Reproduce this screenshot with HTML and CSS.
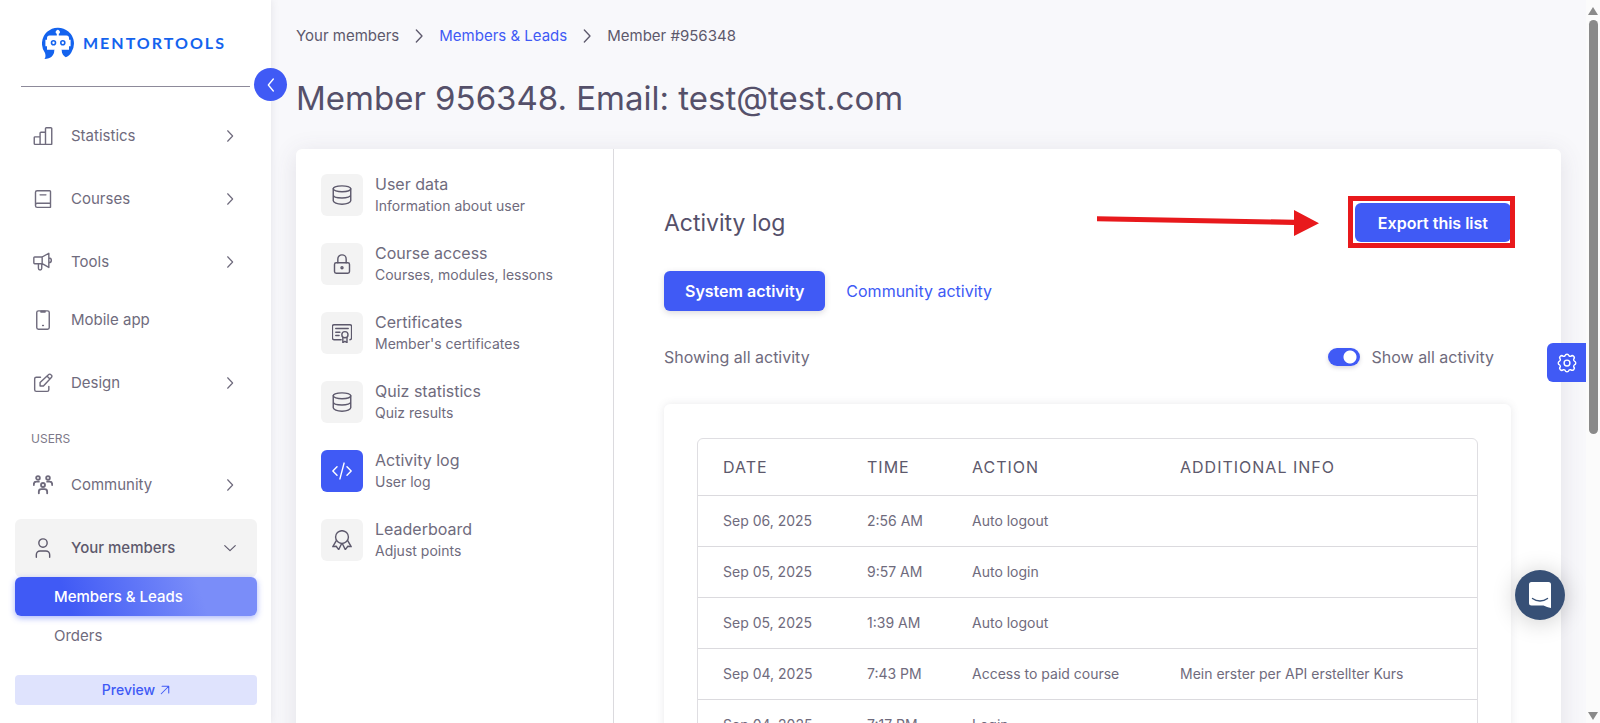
FILE: index.html
```html
<!DOCTYPE html>
<html lang="en">
<head>
    <meta charset="UTF-8">
    <meta name="viewport" content="width=device-width, initial-scale=1.0">
    <title>Member #956348</title>
    <link rel="stylesheet" href="styles.css">
</head>
<body>
    <!-- shared icons -->
    <svg class="sprite" aria-hidden="true">
        <symbol id="chevron" viewBox="0 0 24 24"><path d="M8 3l8.500 9L8 21"/></symbol>
        <symbol id="database" viewBox="0 0 24 24"><ellipse cx="12" cy="4.500" rx="10.500" ry="3.500"/><path d="M1.500 4.500v14.500c0 2 4.500 4 10.500 4s10.500-2 10.500-4v-14.500M1.500 12c0 2 4.500 3.500 10.500 3.500s10.500-1.500 10.500-3.500"/></symbol>
    </svg>

    <aside class="sidebar">
        <div class="brand">
            <svg class="brand-icon" viewBox="0 0 32 32" aria-hidden="true">
                <path fill="#1463ee" d="M2.500 32c1.300-1.800 1.200-3.500.5-6A16 16 0 1 1 29.300 25.500c-1.500 2.500-3.300 3.800-5.500 4.700-2.500-1.500-4-3.500-4.300-7.200h-7c-.2 5-3.500 9-10 9z"/>
                <path fill="#fff" d="M7.500 8.500h7.300V6.800a2 2 0 1 1 2 0v1.700h7.700a2.500 2.500 0 0 1 2.500 2.500v1.800h1.600v6.400H27v3.600H5v-3.600H3.400v-6.400H5V11a2.500 2.500 0 0 1 2.500-2.500zM12.600 22h6.800v10h-6.800z"/>
                <circle cx="11.500" cy="15.800" r="2" fill="none" stroke="#1463ee" stroke-width="1.600"/>
                <circle cx="20.800" cy="15.800" r="2" fill="none" stroke="#1463ee" stroke-width="1.600"/>
            </svg>
            <span class="brand-name">MENTORTOOLS</span>
        </div>
        <button class="collapse-btn" aria-label="Collapse menu"><svg class="icon" viewBox="0 0 24 24"><path d="M15.500 3L8 12l7.500 9"/></svg></button>

        <nav class="nav">
            <a href="#" class="nav-item">
                <svg class="icon" viewBox="0 0 24 24"><path d="M2 22h20.500V3a1 1 0 0 0-1-1H16a1 1 0 0 0-1 1v19M15 7.500H9.500a1 1 0 0 0-1 1V22M8.500 13H2.500a1 1 0 0 0-1 1v7a1 1 0 0 0 1 1"/></svg>
                <span>Statistics</span>
                <svg class="icon arrow"><use href="#chevron"/></svg>
            </a>
            <a href="#" class="nav-item">
                <svg class="icon" viewBox="0 0 24 24"><path d="M5 2h15a1 1 0 0 1 1 1v19H5a2 2 0 0 1-2-2V4a2 2 0 0 1 2-2zM3 19a2 2 0 0 1 2-2h16M8.500 7h7"/></svg>
                <span>Courses</span>
                <svg class="icon arrow"><use href="#chevron"/></svg>
            </a>
            <a href="#" class="nav-item">
                <svg class="icon" viewBox="0 0 24 24"><path d="M2 6h9l8-4.500v17L11 14H2a1 1 0 0 1-1-1V7a1 1 0 0 1 1-1zM11 6v8M19 7c4 0 4 6 0 6M6.500 14v5.500a2 2 0 0 0 4 0V14"/></svg>
                <span>Tools</span>
                <svg class="icon arrow"><use href="#chevron"/></svg>
            </a>
            <a href="#" class="nav-item tight">
                <svg class="icon" viewBox="0 0 24 24"><rect x="4.500" y="1" width="15" height="22" rx="2"/><path d="M9.500 1.500h5v1h-5zM11.500 18.500h1"/></svg>
                <span>Mobile app</span>
            </a>
            <a href="#" class="nav-item">
                <svg class="icon" viewBox="0 0 24 24"><path d="M9 5H4a2 2 0 0 0-2 2v13a2 2 0 0 0 2 2h13a2 2 0 0 0 2-2v-4M8.500 15.500v-4L18.500 2a2 2 0 0 1 3 0l.5.500a2 2 0 0 1 0 3l-9.500 10zM17 4l3 3"/></svg>
                <span>Design</span>
                <svg class="icon arrow"><use href="#chevron"/></svg>
            </a>
            <p class="nav-label">USERS</p>
            <a href="#" class="nav-item">
                <svg class="icon thick" viewBox="0 0 24 24"><circle cx="6" cy="3.500" r="2.200"/><circle cx="18" cy="3.500" r="2.200"/><circle cx="12" cy="12" r="2.400"/><path d="M1 12V11a3 3 0 0 1 3-3h3M23 12V11a3 3 0 0 0-3-3h-3M7 22v-2a3 3 0 0 1 3-3h4a3 3 0 0 1 3 3v2"/></svg>
                <span>Community</span>
                <svg class="icon arrow"><use href="#chevron"/></svg>
            </a>
            <a href="#" class="nav-item open">
                <svg class="icon" viewBox="0 0 24 24"><circle cx="12" cy="6" r="5"/><path d="M4 23v-3a4.500 4.500 0 0 1 4.500-4.500h7A4.500 4.500 0 0 1 20 20v3"/></svg>
                <span>Your members</span>
                <svg class="icon arrow" viewBox="0 0 24 24"><path d="M3 8l9 8.500L21 8"/></svg>
            </a>
            <a href="#" class="sub-item active">Members &amp; Leads</a>
            <a href="#" class="sub-item">Orders</a>
        </nav>
        <a href="#" class="preview">Preview <svg class="icon" viewBox="0 0 24 24"><path d="M3 21L21 3M5 3h16v16"/></svg></a>
    </aside>

    <main class="main">
        <nav class="breadcrumb" aria-label="Breadcrumb">
            <span>Your members</span>
            <svg class="icon"><use href="#chevron"/></svg>
            <a href="#">Members &amp; Leads</a>
            <svg class="icon"><use href="#chevron"/></svg>
            <span>Member #956348</span>
        </nav>
        <h1>Member 956348. Email: test@test.com</h1>

        <div class="card">
            <nav class="member-menu">
                <a href="#" class="menu-item">
                    <span class="menu-icon"><svg class="icon"><use href="#database"/></svg></span>
                    <span class="menu-text">User data<small>Information about user</small></span>
                </a>
                <a href="#" class="menu-item">
                    <span class="menu-icon"><svg class="icon" viewBox="0 0 24 24"><rect x="3" y="10.500" width="18" height="12.500" rx="2"/><path d="M7 10.500V6a5 5 0 0 1 10 0v4.500"/><circle cx="12" cy="16.500" r="1.200"/></svg></span>
                    <span class="menu-text">Course access<small>Courses, modules, lessons</small></span>
                </a>
                <a href="#" class="menu-item">
                    <span class="menu-icon"><svg class="icon" viewBox="0 0 24 24"><path d="M11 20H2.500a2 2 0 0 1-2-2V4a2 2 0 0 1 2-2h19a2 2 0 0 1 2 2v14a2 2 0 0 1-2 2M4.500 6.500h15M4.500 11h5M4.500 15h4"/><circle cx="15.500" cy="14" r="3.700"/><path d="M13 17.500V23.500l2.500-1.500 2.500 1.500v-6"/></svg></span>
                    <span class="menu-text">Certificates<small>Member's certificates</small></span>
                </a>
                <a href="#" class="menu-item">
                    <span class="menu-icon"><svg class="icon"><use href="#database"/></svg></span>
                    <span class="menu-text">Quiz statistics<small>Quiz results</small></span>
                </a>
                <a href="#" class="menu-item active">
                    <span class="menu-icon"><svg class="icon" viewBox="0 0 24 24"><path d="M6 7l-5 5 5 5M18 7l5 5-5 5M14.500 2.500l-5 19"/></svg></span>
                    <span class="menu-text">Activity log<small>User log</small></span>
                </a>
                <a href="#" class="menu-item">
                    <span class="menu-icon"><svg class="icon" viewBox="0 0 24 24"><circle cx="12" cy="8.500" r="7.700"/><path d="M5 13L1 20l4-.5L8 23.500l3.500-7M19 13l4 7-4-.5-3 4-3.500-7"/></svg></span>
                    <span class="menu-text">Leaderboard<small>Adjust points</small></span>
                </a>
            </nav>

            <section class="content">
                <div class="content-head">
                    <h2>Activity log</h2>
                    <svg class="pointer" viewBox="0 0 222 26" aria-hidden="true"><path d="M0 6.300l197 3.500V0l25 13.300L197 26v-11L0 11.300z"/></svg>
                    <div class="export">
                        <button class="btn">Export this list</button>
                    </div>
                </div>
                <div class="tabs">
                    <button class="btn raised">System activity</button>
                    <button class="btn link">Community activity</button>
                </div>
                <div class="filter">
                    <span>Showing all activity</span>
                    <label class="switch"><input type="checkbox" role="switch" checked>Show all activity</label>
                </div>
                <div class="table-card">
                    <table>
                        <thead>
                            <tr><th class="col-date">DATE</th><th class="col-time">TIME</th><th class="col-action">ACTION</th><th>ADDITIONAL INFO</th></tr>
                        </thead>
                        <tbody>
                            <tr><td>Sep 06, 2025</td><td>2:56 AM</td><td>Auto logout</td><td></td></tr>
                            <tr><td>Sep 05, 2025</td><td>9:57 AM</td><td>Auto login</td><td></td></tr>
                            <tr><td>Sep 05, 2025</td><td>1:39 AM</td><td>Auto logout</td><td></td></tr>
                            <tr><td>Sep 04, 2025</td><td>7:43 PM</td><td>Access to paid course</td><td>Mein erster per API erstellter Kurs</td></tr>
                            <tr><td>Sep 04, 2025</td><td>7:17 PM</td><td>Login</td><td></td></tr>
                        </tbody>
                    </table>
                </div>
            </section>
        </div>
    </main>

    <div class="scrollbar" aria-hidden="true">
        <svg viewBox="0 0 10 8"><path d="M5 0l5 8H0z"/></svg>
        <div class="thumb"></div>
        <svg class="down" viewBox="0 0 10 8"><path d="M0 0h10L5 8z"/></svg>
    </div>

    <button class="settings-btn" aria-label="Settings"><svg class="icon" viewBox="0 0 24 24"><circle cx="12" cy="12" r="3.500"/><path d="M9.700 3.200a2.400 2.400 0 0 1 4.600 0 2.400 2.400 0 0 0 2.300.8 2.400 2.400 0 0 1 3.400 3.400 2.400 2.400 0 0 0 .8 2.300 2.400 2.400 0 0 1 0 4.600 2.400 2.400 0 0 0-.8 2.300 2.400 2.400 0 0 1-3.400 3.400 2.400 2.400 0 0 0-2.300.8 2.400 2.400 0 0 1-4.600 0 2.400 2.400 0 0 0-2.300-.8A2.400 2.400 0 0 1 4 16.600a2.400 2.400 0 0 0-.8-2.300 2.400 2.400 0 0 1 0-4.600A2.400 2.400 0 0 0 4 7.400 2.400 2.400 0 0 1 7.400 4a2.400 2.400 0 0 0 2.300-.8z"/></svg></button>
    <button class="chat-btn" aria-label="Open chat">
        <svg viewBox="0 0 22 26"><path fill="#fff" d="M2.500 0h17A2.500 2.500 0 0 1 22 2.500V26c-3-.5-5-1.500-7.500-2.500h-12A2.500 2.500 0 0 1 0 21V2.500A2.500 2.500 0 0 1 2.500 0z"/><path fill="none" stroke="#375076" stroke-width="1.400" stroke-linecap="round" d="M3.500 16.500c4.500 3.300 10.500 3.300 15 0"/></svg>
    </button>
</body>
</html>
```
FILE: styles.css
```css
* {
    box-sizing: border-box;
}
body {
    margin: 0;
    display: flex;
    height: 100vh;
    overflow: hidden;
    background: #f8f8fb;
    color: #6f6b7d;
    font-family: Inter, "Liberation Sans", sans-serif;
    font-size: 16px;
    line-height: 24px;
}
a {
    color: inherit;
    text-decoration: none;
}
button {
    font: inherit;
    border: none;
    padding: 0;
    cursor: pointer;
}
.sprite {
    position: absolute;
    width: 0;
    height: 0;
}
.icon {
    width: 20px;
    height: 20px;
    flex: none;
    fill: none;
    stroke: currentColor;
    stroke-width: 1.7;
    stroke-linecap: round;
    stroke-linejoin: round;
}
.icon.thick {
    stroke-width: 2.2;
}

/* sidebar */
.sidebar {
    position: relative;
    z-index: 1;
    flex: none;
    width: 271px;
    padding: 0 14px 0 15px;
    display: flex;
    flex-direction: column;
    background: #fff;
    box-shadow: 0 0 8px rgba(75, 70, 92, 0.12);
}
.brand {
    display: flex;
    align-items: center;
    gap: 9px;
    height: 87px;
    margin: 0 7px 20px 6px;
    padding-left: 21px;
    border-bottom: 1px solid #8d8a9a;
}
.brand-icon {
    width: 32px;
    height: 32px;
}
.brand-name {
    color: #1463ee;
    font-family: Lato, sans-serif;
    font-size: 16px;
    font-weight: 700;
    letter-spacing: 2px;
}
.collapse-btn {
    position: absolute;
    top: 68px;
    right: -16px;
    display: grid;
    place-items: center;
    width: 33px;
    height: 33px;
    border-radius: 50%;
    background: #405af5;
    color: #fff;
}
.collapse-btn .icon {
    width: 16px;
    height: 16px;
    stroke-width: 2;
}
.nav {
    font-size: 15px;
}
.nav-item {
    display: flex;
    align-items: center;
    gap: 18px;
    height: 58px;
    margin-top: 5px;
    padding: 0 20px 0 18px;
    border-radius: 6px;
}
.nav-item:first-child,
.nav-item.tight {
    margin-top: 0;
}
.nav-item .arrow {
    width: 14px;
    height: 14px;
    margin-left: auto;
    stroke-width: 2;
}
.nav-item.open {
    background: #f3f3f3;
    color: #5d596c;
    font-weight: 500;
}
.nav-label {
    margin: 15px 0 0 16px;
    font-size: 12px;
    line-height: 24px;
    color: #7d7989;
}
.sub-item {
    display: block;
    padding-left: 39px;
    line-height: 39px;
    border-radius: 6px;
}
.sub-item.active {
    background: linear-gradient(72deg, #405af5 22%, #7a8df9 76%);
    box-shadow: 0 2px 6px rgba(64, 90, 245, 0.45);
    color: #fff;
    font-weight: 500;
}
.preview {
    display: flex;
    align-items: center;
    justify-content: center;
    gap: 5px;
    margin-top: 20px;
    height: 30px;
    border-radius: 4px;
    background: #dfe3fd;
    color: #405af5;
    font-size: 14px;
    font-weight: 500;
}
.preview .icon {
    width: 10px;
    height: 10px;
    stroke-width: 2.5;
}

/* page */
.main {
    flex: 1;
    min-width: 0;
    padding: 24px 25px 0;
}
.breadcrumb {
    display: flex;
    align-items: center;
    gap: 12px;
    font-size: 15px;
    color: #5d596c;
}
.breadcrumb a {
    color: #405af5;
}
.breadcrumb .icon {
    width: 16px;
    height: 16px;
    stroke-width: 2;
}
h1 {
    margin: 28px 0;
    font-size: 33px;
    line-height: 45px;
    font-weight: 400;
    color: #55506a;
}
.card {
    display: flex;
    min-height: 100vh;
    background: #fff;
    border-radius: 6px;
    box-shadow: 0 4px 24px rgba(75, 70, 92, 0.13);
}
.member-menu {
    flex: none;
    width: 318px;
    padding: 25px;
    display: flex;
    flex-direction: column;
    gap: 27px;
    border-right: 1px solid #dbdade;
}
.menu-item {
    display: flex;
    align-items: center;
    gap: 12px;
}
.menu-icon {
    display: grid;
    place-items: center;
    width: 42px;
    height: 42px;
    border-radius: 6px;
    background: #f3f3f3;
    color: #5d596c;
}
.menu-item.active .menu-icon {
    background: #405af5;
    color: #fff;
}
.menu-text {
    line-height: 21px;
}
.menu-text small {
    display: block;
    font-size: 14px;
}

.content {
    flex: 1;
    min-width: 0;
    padding: 54px 50px 0;
}
.content-head {
    position: relative;
    display: flex;
    justify-content: space-between;
    align-items: center;
}
h2 {
    margin: 0;
    font-size: 23px;
    line-height: 30px;
    font-weight: 400;
    color: #55506a;
}
.btn {
    height: 39px;
    padding: 0 21px;
    border-radius: 6px;
    background: #405af5;
    color: #fff;
    font-weight: 600;
}
.btn.raised {
    height: 40px;
    box-shadow: 0 2px 6px rgba(75, 70, 92, 0.2);
}
.btn.link {
    background: none;
    color: #405af5;
    font-weight: 400;
}
.export {
    position: relative;
}
.export .btn {
    padding: 0 23px;
}
/* red frame and arrow lie over the header */
.export::after {
    content: "";
    position: absolute;
    inset: -7px -4px -6px -7px;
    border: 5px solid #e8191c;
}
.pointer {
    position: absolute;
    right: 192px;
    width: 222px;
    height: 26px;
    fill: #e8191c;
}
.tabs {
    display: flex;
    margin: 29px 0 34px;
}
.filter {
    display: flex;
    justify-content: space-between;
    padding-right: 17px;
}
.switch {
    display: flex;
    align-items: center;
    gap: 12px;
}
.switch input {
    appearance: none;
    width: 32px;
    height: 18px;
    margin: 0;
    border-radius: 9px;
    background: radial-gradient(circle at 22px 9px, #fff 6px, #405af5 7px);
    box-shadow: 0 2px 4px rgba(75, 70, 92, 0.2);
}
.table-card {
    height: 100%;
    margin-top: 35px;
    padding: 34px 33px;
    border-radius: 6px;
    box-shadow: 0 0 8px rgba(75, 70, 92, 0.12);
}
table {
    width: 100%;
    table-layout: fixed;
    border: 1px solid #dfdee2;
    border-radius: 6px;
    border-spacing: 0;
    font-size: 14px;
}
th, td {
    height: 51px;
    padding: 0 0 0 25px;
    text-align: left;
    border-bottom: 1px solid #dbdade;
}
th {
    height: 57px;
    font-size: 16px;
    font-weight: 400;
    letter-spacing: 1px;
    color: #5d596c;
}
.col-date {
    width: 144px;
}
.col-time {
    width: 105px;
}
.col-action {
    width: 208px;
}

/* right edge */
.scrollbar {
    flex: none;
    width: 14px;
    padding: 7px 0 3px;
    display: flex;
    flex-direction: column;
    align-items: center;
    background: #fbfbfb;
}
.scrollbar svg {
    width: 10px;
    height: 8px;
    fill: #8a8a8a;
}
.scrollbar .down {
    margin-top: auto;
}
.thumb {
    width: 9px;
    height: 58%;
    margin-top: 5px;
    border-radius: 5px;
    background: #8a8a8a;
}
.settings-btn {
    position: fixed;
    top: 343px;
    right: 14px;
    display: grid;
    place-items: center;
    width: 39px;
    height: 39px;
    border-radius: 6px 0 0 6px;
    background: #405af5;
    color: #fff;
}
.chat-btn {
    position: fixed;
    right: 35px;
    bottom: 103px;
    display: grid;
    place-items: center;
    width: 50px;
    height: 50px;
    border-radius: 50%;
    background: #375076;
    box-shadow: 0 2px 24px rgba(0, 0, 0, 0.2);
}
.chat-btn svg {
    width: 22px;
    height: 26px;
}
```
